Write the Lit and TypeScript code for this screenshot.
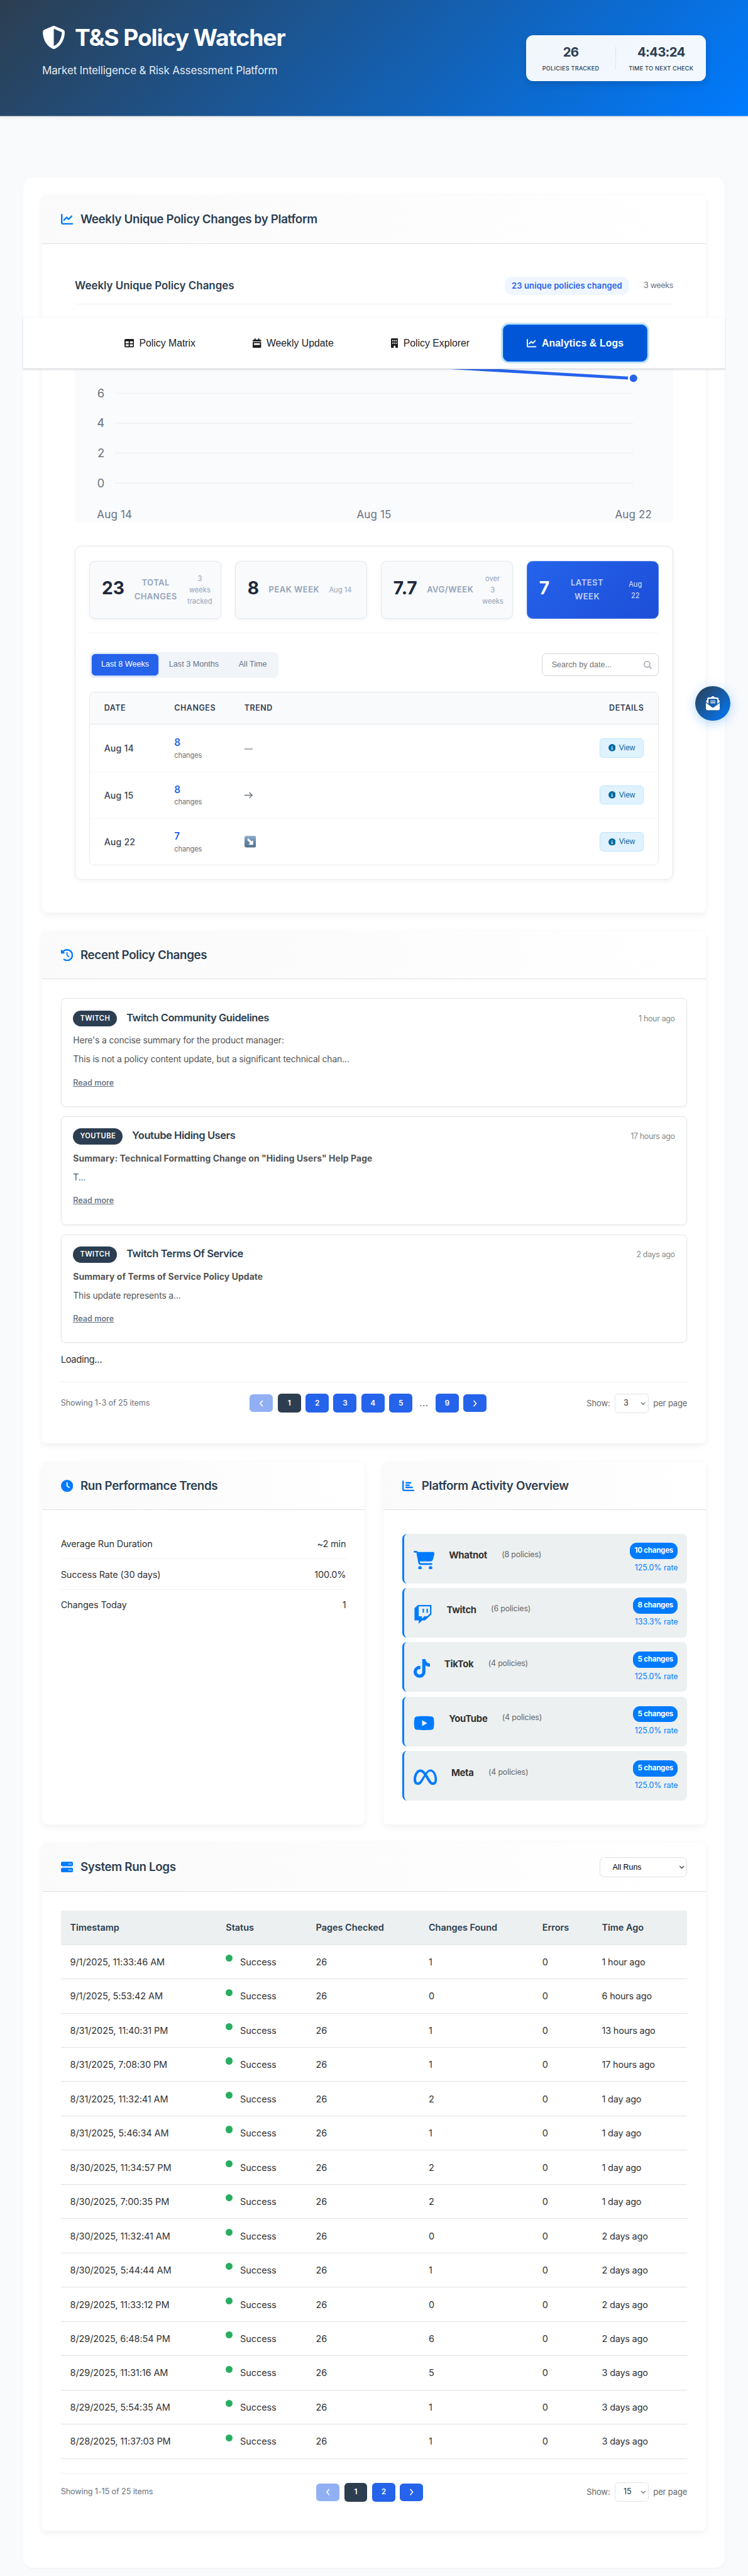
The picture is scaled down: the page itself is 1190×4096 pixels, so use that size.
import { LitElement, html, svg, css, nothing } from "lit";
import { customElement, property } from "lit/decorators.js";
import { classMap } from "lit/directives/class-map.js";

type IconDef = { w: number; d: string };

const ICONS: Record<string, IconDef> = {
  shield: { w: 512, d: "M256 0c4.6 0 9.2 1 13.4 2.9L457.7 82.8c22 9.3 38.4 31 38.3 57.2c-.5 99.2-41.3 280.7-213.6 363.2c-16.7 8-36.1 8-52.8 0C57.3 420.7 16.5 239.2 16 140c-.1-26.2 16.3-47.9 38.3-57.2L242.7 2.9C246.8 1 251.4 0 256 0zm0 66.8V444.8C394 378 431.1 230.1 432 141.4L256 66.8l0 0z" },
  line: { w: 512, d: "M64 64c0-17.7-14.3-32-32-32S0 46.3 0 64V400c0 44.2 35.8 80 80 80H480c17.7 0 32-14.3 32-32s-14.3-32-32-32H80c-8.8 0-16-7.2-16-16V64zm406.6 86.6c12.5-12.5 12.5-32.8 0-45.3s-32.8-12.5-45.3 0L320 210.7l-57.4-57.4c-12.5-12.5-32.8-12.5-45.3 0l-112 112c-12.5 12.5-12.5 32.8 0 45.3s32.8 12.5 45.3 0L240 221.3l57.4 57.4c12.5 12.5 32.8 12.5 45.3 0l128-128z" },
  table: { w: 512, d: "M64 256V160H224v96H64zm0 64H224v96H64V320zm224 96V320H448v96H288zM448 256H288V160H448v96zM64 32C28.7 32 0 60.7 0 96V416c0 35.3 28.7 64 64 64H448c35.3 0 64-28.7 64-64V96c0-35.3-28.7-64-64-64H64z" },
  week: { w: 448, d: "M128 0c17.7 0 32 14.3 32 32V64H288V32c0-17.7 14.3-32 32-32s32 14.3 32 32V64h48c26.5 0 48 21.5 48 48v48H0V112C0 85.5 21.5 64 48 64H96V32c0-17.7 14.3-32 32-32zM0 192H448V464c0 26.5-21.5 48-48 48H48c-26.5 0-48-21.5-48-48V192zm80 64c-8.8 0-16 7.2-16 16v64c0 8.8 7.2 16 16 16H368c8.8 0 16-7.2 16-16V272c0-8.8-7.2-16-16-16H80z" },
  building: { w: 384, d: "M48 0C21.5 0 0 21.5 0 48V464c0 26.5 21.5 48 48 48h96V432c0-26.5 21.5-48 48-48s48 21.5 48 48v80h96c26.5 0 48-21.5 48-48V48c0-26.5-21.5-48-48-48H48zM64 240c0-8.8 7.2-16 16-16h32c8.8 0 16 7.2 16 16v32c0 8.8-7.2 16-16 16H80c-8.8 0-16-7.2-16-16V240zm112-16h32c8.8 0 16 7.2 16 16v32c0 8.8-7.2 16-16 16H176c-8.8 0-16-7.2-16-16V240c0-8.8 7.2-16 16-16zm80 16c0-8.8 7.2-16 16-16h32c8.8 0 16 7.2 16 16v32c0 8.8-7.2 16-16 16H272c-8.8 0-16-7.2-16-16V240zM80 96h32c8.8 0 16 7.2 16 16v32c0 8.8-7.2 16-16 16H80c-8.8 0-16-7.2-16-16V112c0-8.8 7.2-16 16-16zm80 16c0-8.8 7.2-16 16-16h32c8.8 0 16 7.2 16 16v32c0 8.8-7.2 16-16 16H176c-8.8 0-16-7.2-16-16V112zM272 96h32c8.8 0 16 7.2 16 16v32c0 8.8-7.2 16-16 16H272c-8.8 0-16-7.2-16-16V112c0-8.8 7.2-16 16-16z" },
  history: { w: 512, d: "M75 75L41 41C25.9 25.9 0 36.6 0 57.9V168c0 13.3 10.7 24 24 24H134.1c21.4 0 32.1-25.9 17-41l-30.8-30.8C155 85.5 203 64 256 64c106 0 192 86 192 192s-86 192-192 192c-40.8 0-78.6-12.7-109.7-34.4c-14.5-10.1-34.4-6.6-44.6 7.9s-6.6 34.4 7.9 44.6C151.2 495 201.7 512 256 512c141.4 0 256-114.6 256-256S397.4 0 256 0C185.3 0 121.3 28.7 75 75zm181 53c-13.3 0-24 10.7-24 24V256c0 6.4 2.5 12.5 7 17l72 72c9.4 9.4 24.6 9.4 33.9 0s9.4-24.6 0-33.9l-65-65V152c0-13.3-10.7-24-24-24z" },
  clock: { w: 512, d: "M256 0a256 256 0 1 1 0 512A256 256 0 1 1 256 0zM232 120V256c0 8 4 15.5 10.7 20l96 64c11 7.4 25.9 4.4 33.3-6.7s4.4-25.9-6.7-33.3L280 243.2V120c0-13.3-10.7-24-24-24s-24 10.7-24 24z" },
  bars: { w: 512, d: "M32 32c17.7 0 32 14.3 32 32V400c0 8.8 7.2 16 16 16H480c17.7 0 32 14.3 32 32s-14.3 32-32 32H80c-44.2 0-80-35.8-80-80V64C0 46.3 14.3 32 32 32zm96 96c0-17.7 14.3-32 32-32l192 0c17.7 0 32 14.3 32 32s-14.3 32-32 32H160c-17.7 0-32-14.3-32-32zm32 64H288c17.7 0 32 14.3 32 32s-14.3 32-32 32H160c-17.7 0-32-14.3-32-32s14.3-32 32-32zm0 96H416c17.7 0 32 14.3 32 32s-14.3 32-32 32H160c-17.7 0-32-14.3-32-32s14.3-32 32-32z" },
  server: { w: 512, d: "M64 32C28.7 32 0 60.7 0 96v64c0 35.3 28.7 64 64 64H448c35.3 0 64-28.7 64-64V96c0-35.3-28.7-64-64-64H64zm280 72a24 24 0 1 1 0 48 24 24 0 1 1 0-48zm48 24a24 24 0 1 1 48 0 24 24 0 1 1 -48 0zM64 288c-35.3 0-64 28.7-64 64v64c0 35.3 28.7 64 64 64H448c35.3 0 64-28.7 64-64V352c0-35.3-28.7-64-64-64H64zm280 72a24 24 0 1 1 0 48 24 24 0 1 1 0-48zm56 24a24 24 0 1 1 48 0 24 24 0 1 1 -48 0z" },
  info: { w: 512, d: "M256 512A256 256 0 1 0 256 0a256 256 0 1 0 0 512zM216 336h24V272H216c-13.3 0-24-10.7-24-24s10.7-24 24-24h48c13.3 0 24 10.7 24 24v88h8c13.3 0 24 10.7 24 24s-10.7 24-24 24H216c-13.3 0-24-10.7-24-24s10.7-24 24-24zm40-208a32 32 0 1 1 0 64 32 32 0 1 1 0-64z" },
  cart: { w: 576, d: "M0 24C0 10.7 10.7 0 24 0H69.5c22 0 41.5 12.8 50.6 32h411c26.3 0 45.5 25 38.6 50.4l-41 152.3c-8.5 31.4-37 53.3-69.5 53.3H170.7l5.4 28.5c2.2 11.3 12.1 19.5 23.6 19.5H488c13.3 0 24 10.7 24 24s-10.7 24-24 24H199.7c-34.6 0-64.3-24.6-70.7-58.5L77.4 54.5c-.7-3.8-4-6.5-7.9-6.5H24C10.7 48 0 37.3 0 24zM128 464a48 48 0 1 1 96 0 48 48 0 1 1 -96 0zm336-48a48 48 0 1 1 0 96 48 48 0 1 1 0-96z" },
  twitch: { w: 512, d: "M391.17,103.47H352.54v109.7h38.63ZM285,103H246.37V212.75H285ZM120.83,0,24.31,91.42V420.58H140.14V512l96.53-91.42h77.25L487.69,256V0ZM449.07,237.75l-77.22,73.12H294.61l-67.6,64v-64H140.14V36.58H449.07Z" },
  tiktok: { w: 448, d: "M448,209.91a210.06,210.06,0,0,1-122.77-39.25V349.38A162.55,162.55,0,1,1,185,188.31V278.2a74.62,74.62,0,1,0,52.23,71.18V0l88,0a121.18,121.18,0,0,0,1.86,22.17h0A122.18,122.18,0,0,0,381,102.39a121.43,121.43,0,0,0,67,20.14Z" },
  youtube: { w: 576, d: "M549.655 124.083c-6.281-23.65-24.787-42.276-48.284-48.597C458.781 64 288 64 288 64S117.22 64 74.629 75.486c-23.497 6.322-42.003 24.947-48.284 48.597-11.412 42.867-11.412 132.305-11.412 132.305s0 89.438 11.412 132.305c6.281 23.65 24.787 41.5 48.284 47.821C117.22 448 288 448 288 448s170.78 0 213.371-11.486c23.497-6.321 42.003-24.171 48.284-47.821 11.412-42.867 11.412-132.305 11.412-132.305s0-89.438-11.412-132.305zm-317.51 213.508V175.185l142.739 81.205-142.739 81.201z" },
  meta: { w: 640, d: "M640 317.9C640 409.2 600.6 466.4 529.7 466.4C467.1 466.4 433.9 431.8 372.8 329.8L341.4 277.2C333.1 264.7 326.9 253 320.2 242.2C300.1 276 273.1 325.2 273.1 325.2C206.1 441.8 168.5 466.4 116.2 466.4C43.42 466.4 0 409.1 0 320.5C0 177.5 79.78 42.4 183.9 42.4C234.1 42.4 277.7 67.08 328.7 131.9C365.8 81.8 406.8 42.4 459.3 42.4C558.4 42.4 640 168.1 640 317.9H640zM287.4 192.2C244.5 130.1 216.5 111.7 183 111.7C121.1 111.7 69.22 217.8 69.22 321.7C69.22 370.2 87.7 397.4 118.8 397.4C149 397.4 167.8 378.4 222 293.6C222 293.6 246.7 254.5 287.4 192.2V192.2zM531.2 397.4C563.4 397.4 578.1 369.9 578.1 322.5C578.1 198.3 523.8 97.08 454.9 97.08C421.7 97.08 393.8 123 360 175.1C369.4 188.9 379.1 204.1 389.3 220.5L426.8 282.9C485.5 377 500.3 397.4 531.2 397.4L531.2 397.4z" },
  mail: { w: 512, d: "M215.4 96H144 107.8 96v8.8V144v40.4 89L.2 202.5c1.6-18.1 10.9-34.9 25.7-45.8L48 140.3V96c0-26.5 21.5-48 48-48h76.6l49.9-36.9C232.2 3.9 243.9 0 256 0s23.8 3.9 33.5 11L339.4 48H416c26.5 0 48 21.5 48 48v44.3l22.1 16.4c14.8 10.9 24.1 27.7 25.7 45.8L416 273.4v-89V144 104.8 96H404.2 368 296.6 215.4zM0 448V242.1L217.6 403.3c11.1 8.2 24.6 12.7 38.4 12.7s27.3-4.4 38.4-12.7L512 242.1V448v0c0 35.3-28.7 64-64 64H64c-35.3 0-64-28.7-64-64v0zM176 160H336c8.8 0 16 7.2 16 16s-7.2 16-16 16H176c-8.8 0-16-7.2-16-16s7.2-16 16-16zm0 64H336c8.8 0 16 7.2 16 16s-7.2 16-16 16H176c-8.8 0-16-7.2-16-16s7.2-16 16-16z" },
};

const icon = (name: string, size: number) => {
  const i = ICONS[name];
  return html`<svg class="icon" width=${(i.w * size) / 512} height=${size} viewBox="0 0 ${i.w} 512" fill="currentColor"><path d=${i.d}></path></svg>`;
};

const base = css`
  *, *::before, *::after { box-sizing: border-box; }
  .icon { display: block; flex: none; }
`;

@customElement("page-bar")
class PageBar extends LitElement {
  @property() label = "";
  @property({ type: Array }) pages: string[] = [];
  @property() size = "";

  static styles = [base, css`
    :host { display: block; }
    .bar { display: flex; justify-content: space-between; align-items: center; height: 32px; color: #6b7280; font-size: 13.6px; line-height: 22px; letter-spacing: -.12px; }
    .pages { display: flex; gap: 8px; align-items: center; }
    .btn { width: 39.7px; height: 32px; border-radius: 6px; background: #2563eb; color: #fff; display: flex; align-items: center; justify-content: center; font-weight: 600; font-size: 12.8px; }
    .arrow { height: 30px; }
    .off { opacity: .5; }
    .on { background: #2c3e50; }
    .dots { width: 23.5px; text-align: center; font-size: 16px; letter-spacing: .5px; }
    .size { display: flex; align-items: center; gap: 8px; color: #666; font-size: 14px; letter-spacing: -.14px; }
    .sel { width: 58px; height: 34px; border: 1px solid #e0e4e8; border-radius: 6px; background: #fff; display: flex; align-items: center; justify-content: space-between; padding: 0 4px 0 14px; font-size: 13.6px; color: #333; }
  `];

  render() {
    const arrow = (d: string) => html`<svg width="8" height="12" viewBox="0 0 8 12" fill="none" stroke="currentColor" stroke-width="1.7"><path d=${d}></path></svg>`;
    return html`<div class="bar">
      <span>${this.label}</span>
      <div class="pages">
        <span class="btn arrow off">${arrow("M6.3 1L2 6L6.3 11")}</span>
        ${this.pages.map((p, i) => p === "..."
          ? html`<span class="dots">...</span>`
          : html`<span class=${classMap({ btn: true, on: i === 0 })}>${p}</span>`)}
        <span class="btn arrow">${arrow("M1.7 1L6 6L1.7 11")}</span>
      </div>
      <div class="size"><span>Show:</span>
        <span class="sel">${this.size}<svg width="9" height="6" viewBox="0 0 9 6" fill="none" stroke="#555" stroke-width="1.2"><path d="M1 1l3.5 3.6L8 1"></path></svg></span>
        <span>per page</span></div>
    </div>`;
  }
}

const STATS = [
  { n: "23", label: ["TOTAL", "CHANGES"], sub: ["3", "weeks", "tracked"], lw: 74, sw: 44 },
  { n: "8", label: ["PEAK WEEK"], sub: ["Aug 14"], lw: 86, sw: 40 },
  { n: "7.7", label: ["AVG/WEEK"], sub: ["over", "3", "weeks"], lw: 78, sw: 36 },
  { n: "7", label: ["LATEST", "WEEK"], sub: ["Aug", "22"], lw: 96, sw: 36, hot: true },
];

const WEEKS = [
  { date: "Aug 14", n: "8", trend: "none" },
  { date: "Aug 15", n: "8", trend: "flat" },
  { date: "Aug 22", n: "7", trend: "down" },
];

const CHANGES = [
  { tag: "TWITCH", title: "Twitch Community Guidelines", ago: "1 hour ago", bold: false, a: "Here's a concise summary for the product manager:", b: "This is not a policy content update, but a significant technical chan..." },
  { tag: "YOUTUBE", title: "Youtube Hiding Users", ago: "17 hours ago", bold: true, a: `Summary: Technical Formatting Change on "Hiding Users" Help Page`, b: "T..." },
  { tag: "TWITCH", title: "Twitch Terms Of Service", ago: "2 days ago", bold: true, a: "Summary of Terms of Service Policy Update", b: "This update represents a..." },
];

const PLATFORMS = [
  { icon: "cart", name: "Whatnot", n: 8, changes: 10, rate: "125.0%" },
  { icon: "twitch", name: "Twitch", n: 6, changes: 8, rate: "133.3%" },
  { icon: "tiktok", name: "TikTok", n: 4, changes: 5, rate: "125.0%" },
  { icon: "youtube", name: "YouTube", n: 4, changes: 5, rate: "125.0%" },
  { icon: "meta", name: "Meta", n: 4, changes: 5, rate: "125.0%" },
];

const RUNS: [string, number, string][] = [
  ["9/1/2025, 11:33:46 AM", 1, "1 hour ago"],
  ["9/1/2025, 5:53:42 AM", 0, "6 hours ago"],
  ["8/31/2025, 11:40:31 PM", 1, "13 hours ago"],
  ["8/31/2025, 7:08:30 PM", 1, "17 hours ago"],
  ["8/31/2025, 11:32:41 AM", 2, "1 day ago"],
  ["8/31/2025, 5:46:34 AM", 1, "1 day ago"],
  ["8/30/2025, 11:34:57 PM", 2, "1 day ago"],
  ["8/30/2025, 7:00:35 PM", 2, "1 day ago"],
  ["8/30/2025, 11:32:41 AM", 0, "2 days ago"],
  ["8/30/2025, 5:44:44 AM", 1, "2 days ago"],
  ["8/29/2025, 11:33:12 PM", 0, "2 days ago"],
  ["8/29/2025, 6:48:54 PM", 6, "2 days ago"],
  ["8/29/2025, 11:31:16 AM", 5, "3 days ago"],
  ["8/29/2025, 5:54:35 AM", 1, "3 days ago"],
  ["8/28/2025, 11:37:03 PM", 1, "3 days ago"],
];

@customElement("app-root")
class AppRoot extends LitElement {
  static styles = [base, css`
    :host { display: block; }
    .page { zoom: 0.9296875; position: relative; width: 1280px; height: 4405.8px; background: #f8fafc; font-family: Inter, "Liberation Sans", sans-serif; color: #333; font-size: 16px; overflow: hidden; }
    .arial { font-family: "Liberation Sans", Arial, sans-serif; }

    .top { height: 199px; padding: 0 72px; display: flex; justify-content: space-between; align-items: flex-start; background: linear-gradient(135deg, #2c3e50 0%, #007bff 100%); border-bottom: 1px solid rgba(255,255,255,.4); box-shadow: 0 2px 8px rgba(0,0,0,.08); color: #fff; }
    .brand { padding-top: 32px; }
    .brand-row { display: flex; align-items: center; gap: 16px; height: 64px; }
    .brand-name { font-size: 40px; font-weight: 700; line-height: 64px; letter-spacing: -1.19px; }
    .tagline { margin-top: 8px; font-size: 18.5px; line-height: 32px; letter-spacing: -.27px; color: rgba(255,255,255,.9); }
    .counts { margin-top: 60px; width: 308px; height: 79px; padding: 20px 0; border-radius: 12px; background: rgba(255,255,255,.95); box-shadow: 0 4px 12px rgba(0,0,0,.15); display: flex; color: #2c3e50; }
    .count { flex: 1; text-align: center; }
    .count + .count { border-left: 1px solid #dfe6ee; }
    .count-n { margin-top: -2px; font-size: 22px; font-weight: 700; line-height: 22px; letter-spacing: -.8px; }
    .count-l { margin-top: 9px; font-size: 9.8px; font-weight: 500; line-height: 17px; letter-spacing: .28px; white-space: nowrap; }

    .main { margin: 104px 40px 0; height: 4089px; padding: 32px; border-radius: 16px; background: #fff; box-shadow: 0 1px 3px rgba(0,0,0,.05); display: flex; flex-direction: column; gap: 32px; }
    .card { flex: none; background: #fff; border-radius: 8px; box-shadow: 0 4px 12px rgba(0,0,0,.06); overflow: hidden; }
    .weekly { height: 1226px; }
    .recent { height: 876px; }
    .duo { flex: none; display: grid; grid-template-columns: 1fr 1fr; gap: 32px; height: 619px; }
    .logs { height: 1176px; }
    .card-head { height: 82px; padding: 0 32px; border-bottom: 1px solid #dde0e2; background: linear-gradient(90deg, #fafafb, #fff); display: flex; align-items: center; gap: 12.8px; color: #007bff; }
    .logs .card-head { height: 84px; }
    .card-title { flex: 1; font-size: 20.2px; font-weight: 600; line-height: 32px; letter-spacing: -.35px; color: #2c3e50; }
    .body { padding: 32px; }

    .chart-head { margin: 56px 56px 0; height: 48px; padding-bottom: 16px; border-bottom: 1px solid #f0f1f3; display: flex; align-items: center; }
    .chart-title { flex: 1; font-size: 18.2px; font-weight: 600; color: #2c3e50; line-height: 31px; }
    .chip { height: 31px; padding: 0 12px; border-radius: 12px; background: #eff6ff; color: #2563eb; font-size: 14px; font-weight: 600; line-height: 31px; letter-spacing: .12px; }
    .chart-note { margin-left: 25px; font-size: 13.4px; line-height: 28px; letter-spacing: -.33px; color: #6b7280; }
    .chart { display: block; margin: 23px 56px 0; width: 1024px; height: 350px; }
    .chart text { font-family: Inter, sans-serif; fill: #6b7280; letter-spacing: .15px; }

    .panel { margin: 40px 56px 0; height: 571px; padding: 24px; border: 1px solid #e5e7eb; border-radius: 12px; box-shadow: 0 2px 8px rgba(0,0,0,.05); }
    .stats { display: grid; grid-template-columns: repeat(4, 1fr); gap: 24px; height: 124px; padding-bottom: 24px; border-bottom: 1px solid #f1f3f5; }
    .stat { border: 1px solid #e2e8f0; border-radius: 10px; background: #f8fafc; box-shadow: 0 2px 6px rgba(0,0,0,.05); padding-left: 20px; display: flex; align-items: center; gap: 16.5px; color: #94a3b8; }
    .stat-n { font-size: 30.4px; font-weight: 700; line-height: 40px; color: #1e293b; padding-bottom: 4px; }
    .stat-l { font-size: 14px; font-weight: 600; line-height: 23px; letter-spacing: .52px; text-align: center; white-space: nowrap; }
    .stat-s { font-size: 12px; line-height: 19.2px; text-align: center; white-space: nowrap; padding-top: 3px; }
    .hot { background: linear-gradient(135deg, #2563eb, #1d4ed8); border-color: #4a7df0; color: rgba(255,255,255,.72); }
    .hot .stat-n { color: #fff; }
    .hot .stat-s { color: rgba(255,255,255,.88); }
    .tools { margin-top: 32px; height: 44px; display: flex; justify-content: space-between; align-items: center; }
    .seg { height: 44px; padding: 4px; border-radius: 8px; background: #f1f5f9; display: flex; gap: 2px; }
    .seg-b { padding: 0 16px; border-radius: 6px; font-size: 13.6px; line-height: 36px; color: #64748b; }
    .seg-on { background: #2563eb; color: #fff; box-shadow: 0 1px 3px rgba(37,99,235,.4); }
    .search { width: 200px; height: 38px; border: 1px solid #d1d5db; border-radius: 8px; padding: 0 10px 0 16px; display: flex; justify-content: space-between; align-items: center; font-size: 13.6px; color: #757575; background: #fff; }
    .weeks { margin-top: 24px; height: 297px; border: 1px solid #e5e7eb; border-radius: 8px; overflow: hidden; }
    .wk { display: grid; grid-template-columns: 120px 120px 1fr auto; align-items: center; padding: 0 24px; height: 80px; border-top: 2px solid #f8f9fb; }
    .wk-h { height: 55px; background: #f8fafc; border-top: 0; border-bottom: 1px solid #e1e5e9; font-size: 13.4px; font-weight: 600; letter-spacing: .62px; color: #374151; }
    .wk-first { border-top: 0; }
    .wk-date { font-size: 15.2px; font-weight: 500; color: #374151; letter-spacing: .2px; }
    .wk-n { font-size: 16.5px; font-weight: 600; line-height: 22px; color: #2563eb; padding-top: 3px; }
    .wk-c { font-size: 12px; line-height: 20px; letter-spacing: -.14px; color: #6b7280; }
    .wk-t { color: #6b7280; font-size: 16px; }
    .view { height: 33px; width: 76px; border: 1px solid #bae6fd; border-radius: 6px; background: #e0f2fe; color: #0369a1; font-size: 12.8px; display: flex; align-items: center; justify-content: center; gap: 6px; }

    .item { height: 186px; margin-bottom: 16px; padding: 20px; border: 1px solid #e5e7e9; border-radius: 8px; box-shadow: 0 1px 3px rgba(0,0,0,.06); }
    .item-head { display: flex; height: 28px; gap: 16px; }
    .tag { height: 27.5px; padding: 0 12px; border-radius: 14px; background: #2c3e50; color: #fff; font-size: 12px; font-weight: 600; letter-spacing: .42px; line-height: 27.5px; }
    .item-title { flex: 1; font-size: 17.8px; font-weight: 600; line-height: 24px; letter-spacing: -.48px; color: #2c3e50; }
    .ago { font-size: 13.4px; line-height: 28px; letter-spacing: -.36px; color: #7f8c8d; }
    .para { font-size: 15px; line-height: 24px; margin-top: 11.5px; letter-spacing: -.17px; color: #555; }
    .para + .para { margin-top: 8.5px; }
    .strong { font-weight: 700; letter-spacing: .08px; }
    .more { display: inline-block; margin-top: 16px; font-size: 13.6px; font-weight: 500; line-height: 24px; color: #5d6d7e; text-decoration: underline; }
    .loading { font-size: 16px; line-height: 26px; letter-spacing: -.42px; }
    .pg { margin-top: 24px; padding-top: 20px; border-top: 1px solid #eef0f2; }
    .logs .pg { padding-top: 16px; }

    .metric { display: flex; justify-content: space-between; align-items: center; height: 52px; border-bottom: 1px solid #eef0f1; font-size: 15.6px; letter-spacing: -.17px; }
    .metric:last-child { border-bottom: 0; }
    .plats { padding: 40px 32px 0; display: flex; flex-direction: column; gap: 8px; }
    .plat { height: 85px; border-left: 4px solid #007bff; border-radius: 8px; background: #ecf0f1; padding: 0 16px; display: flex; align-items: flex-start; gap: 25px; color: #007bff; }
    .plat .icon { margin-top: 29px; }
    .plat-name { margin-top: 25.6px; font-size: 16px; font-weight: 700; line-height: 24px; letter-spacing: -.28px; color: #333; }
    .plat-pol { flex: 1; margin-top: 26px; font-size: 13.4px; line-height: 20px; letter-spacing: -.21px; color: #666; }
    .plat-side { padding-top: 16px; display: flex; flex-direction: column; align-items: flex-end; }
    .pill { height: 27.6px; padding: 0 8px; border-radius: 12px; background: #007bff; color: #fff; font-size: 12.4px; font-weight: 700; line-height: 27.6px; letter-spacing: -.25px; }
    .rate { margin-top: 5px; font-size: 13.4px; line-height: 20px; letter-spacing: -.09px; }

    .runs-sel { width: 150px; height: 35px; border: 1px solid #dcdfe2; border-radius: 8px; background: #fff; color: #000; font-size: 13.333px; display: flex; align-items: center; justify-content: space-between; padding: 0 3px 0 21px; }
    .run { display: grid; grid-template-columns: 266.5px 154px 193px 194.5px 102px 1fr; align-items: center; height: 58.6px; padding-left: 16px; border-bottom: 1px solid #dfe1e3; font-size: 15.6px; letter-spacing: -.1px; }
    .run-ago { letter-spacing: -.24px; }
    .run-h { height: 58.5px; background: #ecf0f1; font-weight: 600; color: #2c3e50; border-bottom-color: #e2e5e7; letter-spacing: -.05px; }
    .state { display: flex; gap: 12.5px; }
    .dot { width: 12px; height: 12px; border-radius: 50%; background: #27ae60; margin-top: -3px; }

    .nav { position: absolute; left: 40px; top: 543px; width: 1200px; height: 88px; background: #fff; border-bottom: 1px solid #cfd2dc; box-shadow: 0 1px 4px rgba(0,0,0,.1); display: flex; justify-content: center; align-items: center; gap: 16px; padding-top: 1px; font-size: 17px; color: #1d1d1f; }
    .tab { height: 64px; padding: 0 41px; display: flex; align-items: center; gap: 9px; }
    .tab-on { background: #0056d6; border: 1px solid #007bff; border-radius: 10px; color: #fff; font-weight: 700; letter-spacing: .14px; padding: 0 40px; box-shadow: 0 0 0 3px #bfdff5; }
    .fab { position: absolute; left: 1190px; top: 1173px; width: 60px; height: 60px; border-radius: 50%; background: linear-gradient(135deg, #2c3e50, #007bff); box-shadow: 0 4px 20px rgba(0,123,255,.3); color: #fff; display: flex; align-items: center; justify-content: center; }
  `];

  private chart() {
    const ticks = [6, 4, 2, 0];
    const y = (v: number) => 282 - v * 25.6;
    return html`<svg class="chart" viewBox="0 0 1024 350">
      <rect width="1024" height="350" rx="8" fill="#fafbfd"></rect>
      ${ticks.map((t) => svg`<line x1="68" x2="956" y1=${y(t)} y2=${y(t)} stroke="#f0f1f4" stroke-width="1.6"></line>
        <text x="51" y=${y(t) + 7} font-size="20" text-anchor="end">${t}</text>`)}
      <path d="M68 ${y(8)}H512L956 ${y(7)}" fill="none" stroke="#2563eb" stroke-width="5"></path>
      <circle cx="956" cy=${y(7)} r="8" fill="#2563eb" stroke="#fff" stroke-width="3"></circle>
      ${["Aug 14", "Aug 15", "Aug 22"].map((d, i) => svg`<text x=${68 + i * 444} y="342" font-size="18.3" text-anchor="middle">${d}</text>`)}
    </svg>`;
  }

  private trend(kind: string) {
    if (kind === "none") return html`<svg class="icon" width="14" height="16" viewBox="0 0 14 16"><path d="M0 9.5H14" stroke="#9ca3af" stroke-width="1.8"></path></svg>`;
    if (kind === "flat") return html`<svg class="icon" width="14" height="16" viewBox="0 0 14 16" fill="none" stroke="#6b7280" stroke-width="1.5"><path d="M0 8H12.6M8.2 3.2L13 8L8.2 12.8"></path></svg>`;
    return html`<svg class="icon" width="20" height="20" viewBox="0 0 20 20">
      <defs><linearGradient id="em" x1="0" y1="0" x2="0" y2="1"><stop offset="0" stop-color="#8fb0cc"></stop><stop offset=".5" stop-color="#6688a8"></stop><stop offset="1" stop-color="#54708c"></stop></linearGradient></defs>
      <rect width="20" height="20" rx="3.5" fill="url(#em)"></rect>
      <path d="M4.6 6.6L6.8 4.4L12.2 9.8L14.8 7.2V15.2H6.8L9.6 12.2Z" fill="#fff"></path></svg>`;
  }

  private head(ic: string, title: string, extra: unknown = nothing) {
    return html`<div class="card-head">${icon(ic, 20.8)}<span class="card-title">${title}</span>${extra}</div>`;
  }

  render() {
    return html`<div class="page">
      <header class="top">
        <div class="brand">
          <div class="brand-row">${icon("shield", 40)}<span class="brand-name">T&amp;S Policy Watcher</span></div>
          <div class="tagline">Market Intelligence &amp; Risk Assessment Platform</div>
        </div>
        <div class="counts">
          <div class="count"><div class="count-n">26</div><div class="count-l">POLICIES TRACKED</div></div>
          <div class="count"><div class="count-n">4:43:24</div><div class="count-l">TIME TO NEXT CHECK</div></div>
        </div>
      </header>

      <main class="main">
        <section class="card weekly">
          ${this.head("line", "Weekly Unique Policy Changes by Platform")}
          <div class="chart-head"><span class="chart-title">Weekly Unique Policy Changes</span><span class="chip">23 unique policies changed</span><span class="chart-note">3 weeks</span></div>
          ${this.chart()}
          <div class="panel">
            <div class="stats">${STATS.map((s) => html`<div class=${classMap({ stat: true, hot: !!s.hot })}>
              <span class="stat-n">${s.n}</span>
              <span class="stat-l" style="width:${s.lw}px">${s.label.map((l) => html`<div>${l}</div>`)}</span>
              <span class="stat-s" style="width:${s.sw}px">${s.sub.map((l) => html`<div>${l}</div>`)}</span></div>`)}</div>
            <div class="tools arial">
              <div class="seg"><span class="seg-b seg-on">Last 8 Weeks</span><span class="seg-b">Last 3 Months</span><span class="seg-b">All Time</span></div>
              <div class="search"><span>Search by date...</span><svg width="16" height="16" viewBox="0 0 16 16" fill="none" stroke="#9ca3af" stroke-width="1.7"><circle cx="6.9" cy="6.7" r="5"></circle><path d="M10.6 10.4L14.6 14.4"></path></svg></div>
            </div>
            <div class="weeks">
              <div class="wk wk-h"><span>DATE</span><span>CHANGES</span><span>TREND</span><span>DETAILS</span></div>
              ${WEEKS.map((w, i) => html`<div class=${classMap({ wk: true, "wk-first": i === 0 })}>
                <span class="wk-date">${w.date}</span>
                <div><div class="wk-n">${w.n}</div><div class="wk-c">changes</div></div>
                <span class="wk-t">${this.trend(w.trend)}</span>
                <span class="view arial">${icon("info", 12.5)}View</span></div>`)}
            </div>
          </div>
        </section>

        <section class="card recent">
          ${this.head("history", "Recent Policy Changes")}
          <div class="body">
            ${CHANGES.map((c) => html`<article class="item">
              <div class="item-head"><span class="tag">${c.tag}</span><span class="item-title">${c.title}</span><span class="ago">${c.ago}</span></div>
              <div class=${classMap({ para: true, strong: c.bold })}>${c.a}</div>
              <div class="para">${c.b}</div>
              <span class="more">Read more</span>
            </article>`)}
            <div class="loading">Loading...</div>
            <div class="pg"><page-bar label="Showing 1-3 of 25 items" .pages=${["1", "2", "3", "4", "5", "...", "9"]} size="3"></page-bar></div>
          </div>
        </section>

        <div class="duo">
          <section class="card">
            ${this.head("clock", "Run Performance Trends")}
            <div class="body">
              <div class="metric"><span>Average Run Duration</span><span>~2 min</span></div>
              <div class="metric"><span>Success Rate (30 days)</span><span>100.0%</span></div>
              <div class="metric"><span>Changes Today</span><span>1</span></div>
            </div>
          </section>
          <section class="card">
            ${this.head("bars", "Platform Activity Overview")}
            <div class="plats">${PLATFORMS.map((p) => html`<div class="plat">${icon(p.icon, 32)}
              <span class="plat-name">${p.name}</span><span class="plat-pol">(${p.n} policies)</span>
              <div class="plat-side"><span class="pill">${p.changes} changes</span><span class="rate">${p.rate} rate</span></div></div>`)}</div>
          </section>
        </div>

        <section class="card logs">
          ${this.head("server", "System Run Logs", html`<span class="runs-sel arial">All Runs<svg width="10" height="7" viewBox="0 0 10 7" fill="none" stroke="#222" stroke-width="1.4"><path d="M1.4 1.2L5 5L8.6 1.2"></path></svg></span>`)}
          <div class="body">
            <div class="run run-h"><span>Timestamp</span><span>Status</span><span>Pages Checked</span><span>Changes Found</span><span>Errors</span><span>Time Ago</span></div>
            ${RUNS.map(([t, n, ago]) => html`<div class="run"><span>${t}</span><span class="state"><span class="dot"></span>Success</span><span>26</span><span>${n}</span><span>0</span><span class="run-ago">${ago}</span></div>`)}
            <div class="pg"><page-bar label="Showing 1-15 of 25 items" .pages=${["1", "2"]} size="15"></page-bar></div>
          </div>
        </section>
      </main>

      <nav class="nav arial">
        <span class="tab">${icon("table", 16.5)}Policy Matrix</span>
        <span class="tab">${icon("week", 16.5)}Weekly Update</span>
        <span class="tab">${icon("building", 16.5)}Policy Explorer</span>
        <span class="tab tab-on">${icon("line", 16.5)}Analytics &amp; Logs</span>
      </nav>
      <div class="fab">${icon("mail", 24)}</div>
    </div>`;
  }
}
